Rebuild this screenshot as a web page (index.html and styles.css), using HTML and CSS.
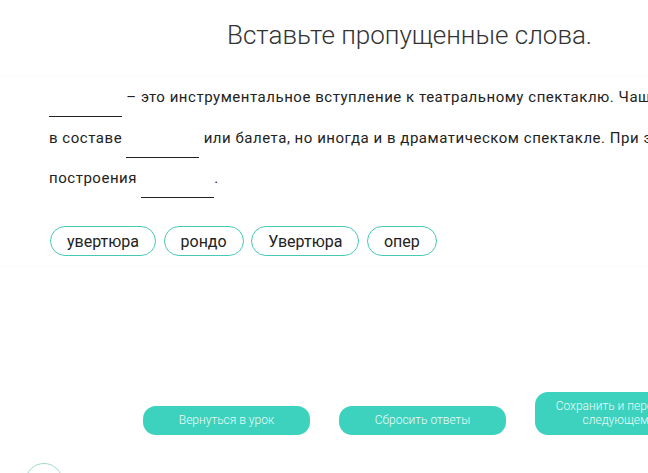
FILE: index.html
```html
<!DOCTYPE html>
<html lang="ru">
<head>
    <meta charset="UTF-8">
    <title>Вставьте пропущенные слова</title>
    <link rel="stylesheet" href="styles.css">
</head>
<body>
    <div id="page">
        <h1 class="title">Вставьте пропущенные слова.</h1>

        <div class="task">
            <p class="text">
                <span class="gap"></span> – это инструментальное вступление к театральному спектаклю. Чаще всего исполняется<br>
                в составе <span class="gap"></span> или балета, но иногда и в драматическом спектакле. При этом может иметь форму<br>
                построения <span class="gap"></span>.
            </p>

            <ul class="words">
                <li>увертюра</li>
                <li>рондо</li>
                <li>Увертюра</li>
                <li>опер</li>
            </ul>
        </div>

        <div class="actions">
            <a class="btn" href="#">Вернуться в урок</a>
            <a class="btn" href="#">Сбросить ответы</a>
            <a class="btn btn-wide" href="#">Сохранить и перейти к<br>следующему</a>
        </div>

        <div class="footer">
            <span class="circle"></span>
            <span class="footer-text">Назад</span>
        </div>
    </div>
</body>
</html>
```

FILE: styles.css
```css
body,ul,li,p,h1 {margin:0;padding:0;}
ul {list-style-type:none;}
html,body {width:100%;height:100%;overflow:hidden;background:#fff;}
body {font-family:Roboto,"Noto Sans",Arial,sans-serif;color:#222;}

#page {width:900px;padding-top:18px;}

.title {margin-left:227px;font-size:26px;font-weight:300;line-height:34px;color:#333;white-space:nowrap;}

.task {margin-top:25px;padding:0 0 10px 49px;box-shadow:-2px 0 3px -1px rgba(0,0,0,.08);}
.text {font-size:15px;letter-spacing:.53px;line-height:40.5px;white-space:nowrap;}
.gap {display:inline-block;width:73px;height:39px;vertical-align:top;border-bottom:1px solid #222;}

.words {display:flex;gap:7.5px;margin:27px 0 0 1px;}
.words li {height:30px;padding:0 16px;border:1px solid #47c9b6;border-radius:16px;font-size:16px;line-height:30px;box-sizing:border-box;cursor:pointer;}

.actions {display:flex;align-items:flex-end;gap:29px;margin:126px 0 0 143px;}
.btn {display:flex;align-items:center;justify-content:center;width:167px;height:29px;border-radius:13px;background:#3dd2be;color:#e9fbf8;font-size:12px;font-weight:300;line-height:14px;text-align:center;text-decoration:none;}
.btn-wide {height:43px;}

.footer {display:flex;align-items:center;gap:6px;margin:28px 0 0 25px;}
.circle {width:36px;height:36px;border:1px solid #9fd9cf;border-radius:50%;}
.footer-text {font-size:12px;color:#eef3f2;}
```
